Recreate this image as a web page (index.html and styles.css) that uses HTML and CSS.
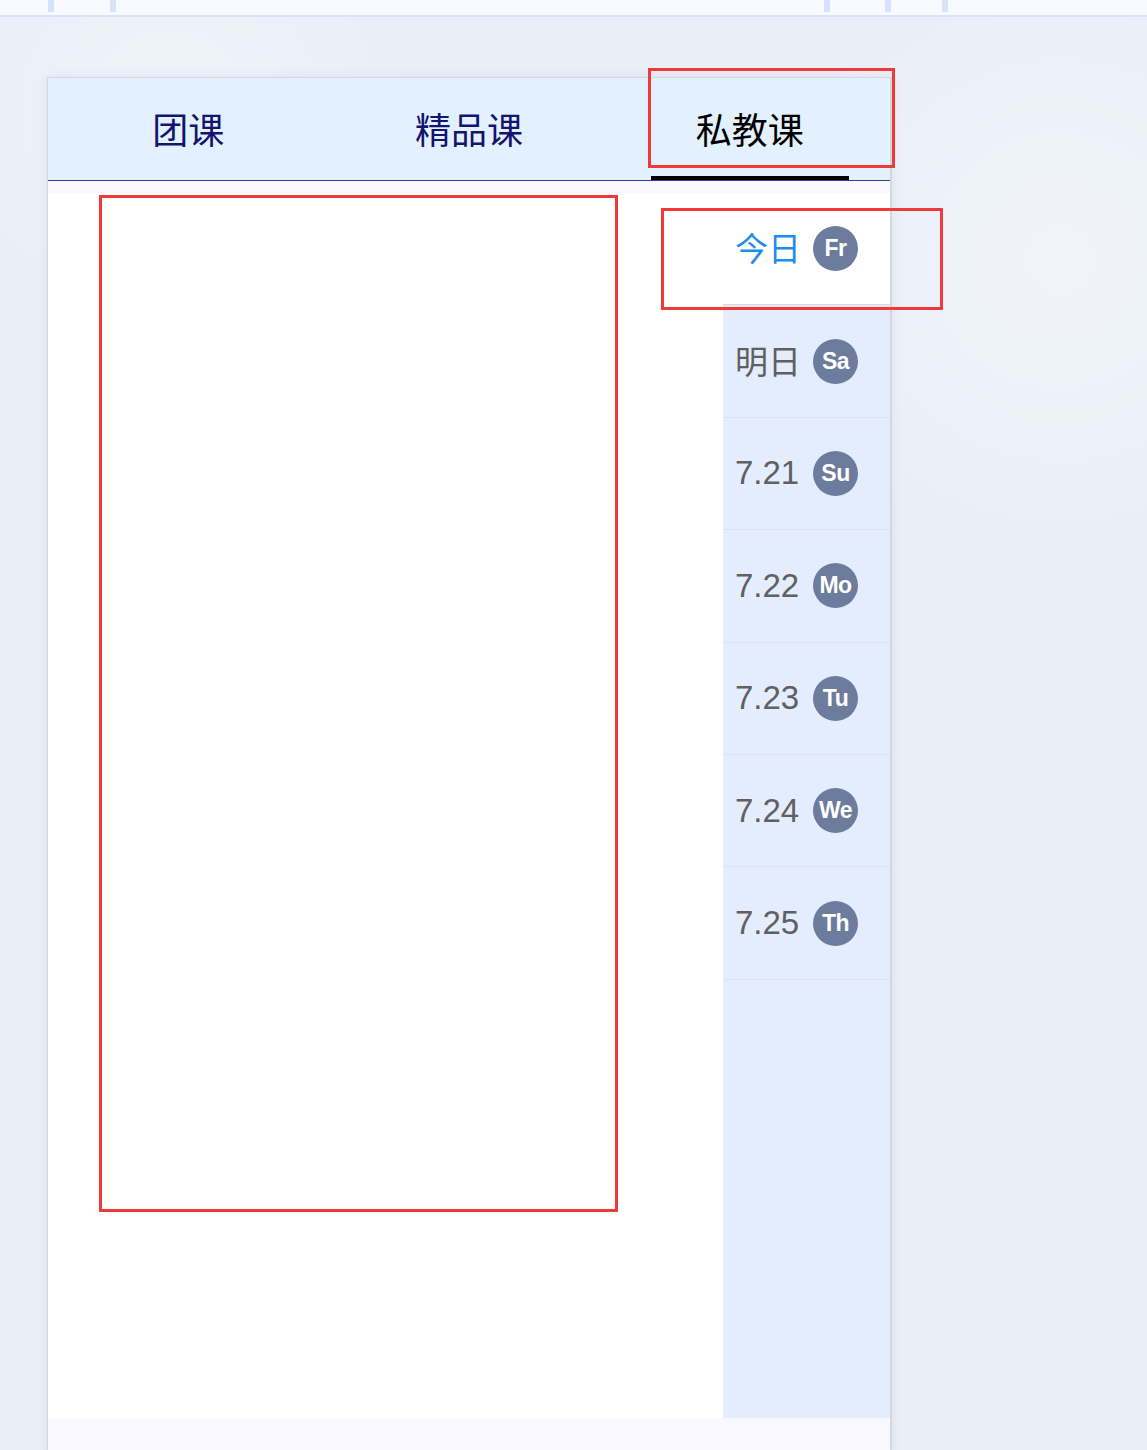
FILE: index.html
```html
<!DOCTYPE html>
<html lang="zh">
<head>
<meta charset="utf-8">
<title>课程</title>
<link rel="stylesheet" href="styles.css">
</head>
<body>
<div class="topbar">
  <span class="tick t1"></span>
  <span class="tick t2"></span>
  <span class="tick t3"></span>
  <span class="tick t4"></span>
  <span class="tick t5"></span>
</div>

<div class="card">
  <div class="tabs">
    <div class="tab"><span class="tab-label">团课</span><span class="tab-bar"></span></div>
    <div class="tab"><span class="tab-label">精品课</span><span class="tab-bar"></span></div>
    <div class="tab active"><span class="tab-label">私教课</span><span class="tab-bar"></span></div>
  </div>
  <div class="gap-strip"></div>
  <div class="body">
    <div class="content"></div>
    <ul class="dates">
      <li class="date selected"><span class="date-text cjk">今日</span><span class="badge">Fr</span></li>
      <li class="date"><span class="date-text cjk">明日</span><span class="badge">Sa</span></li>
      <li class="date"><span class="date-text">7.21</span><span class="badge">Su</span></li>
      <li class="date"><span class="date-text">7.22</span><span class="badge">Mo</span></li>
      <li class="date"><span class="date-text">7.23</span><span class="badge">Tu</span></li>
      <li class="date"><span class="date-text">7.24</span><span class="badge">We</span></li>
      <li class="date"><span class="date-text">7.25</span><span class="badge">Th</span></li>
    </ul>
  </div>
  <div class="foot-strip"></div>
</div>

<div class="mark mark-tab"></div>
<div class="mark mark-today"></div>
<div class="mark mark-list"></div>
</body>
</html>
```

FILE: styles.css
```css
* { box-sizing: border-box; }

html, body {
  margin: 0;
  padding: 0;
}

body {
  position: relative;
  height: 1450px;
  overflow: hidden;
  font-family: "Liberation Sans", "Noto Sans CJK SC", sans-serif;
  background:
    radial-gradient(circle at 1060px 260px, rgba(255,255,255,0.35), rgba(255,255,255,0) 320px),
    radial-gradient(circle at 170px 110px, rgba(255,255,255,0.3), rgba(255,255,255,0) 260px),
    #e9eef7;
}

/* top toolbar strip */
.topbar {
  height: 17px;
  background: #f7f9fe;
  border-bottom: 2px solid #d6e3fb;
  display: flex;
  align-items: flex-start;
}
.tick {
  display: block;
  width: 6px;
  height: 12px;
  background: #d4e2fb;
}
.t1 { margin-left: 48px; }
.t2 { margin-left: 56px; }
.t3 { margin-left: 708px; }
.t4 { margin-left: 55px; }
.t5 { margin-left: 51px; }

/* card */
.card {
  margin: 60px 0 0 47px;
  width: 845px;
  border: 1px solid #d5d7dc;
  border-right-width: 2px;
  border-bottom: 0;
  background: #fff;
  box-shadow: 0 0 10px rgba(60, 70, 100, 0.08);
}

.tabs {
  display: grid;
  grid-template-columns: repeat(3, 1fr);
  height: 103px;
  background: #e3f0fd;
  border-bottom: 1px solid #363c8c;
}
.tab {
  display: flex;
  flex-direction: column;
  align-items: center;
}
.tab-label {
  flex: 1;
  display: flex;
  align-items: center;
  padding-top: 2px;
  font-family: "Noto Sans CJK SC", sans-serif;
  font-size: 36px;
  color: #14146e;
}
.tab-bar {
  width: 198px;
  height: 4px;
  background: transparent;
}
.tab.active .tab-label { color: #000; }
.tab.active .tab-bar { background: #000; }

.gap-strip {
  height: 12px;
  background: #f9f8fe;
}

.body {
  display: flex;
  height: 1225px;
}
.content {
  flex: 1;
  background: #fff;
}

.dates {
  list-style: none;
  margin: 0;
  padding: 0;
  width: 167px;
  background: #e3edfd;
}
.date {
  height: 112.4px;
  display: flex;
  align-items: center;
  padding-left: 12px;
  border-bottom: 1px solid #dde2ea;
}
.date.selected {
  background: #fff;
  border-bottom-color: #d9d9dc;
}
.date-text {
  font-size: 33px;
  color: #606060;
  width: 66px;
  white-space: nowrap;
}
.date-text.cjk {
  margin-top: -3px;
}
.date.selected .date-text { color: #1f8ceb; }

.badge {
  margin-left: 12px;
  width: 45px;
  height: 45px;
  border-radius: 50%;
  background: #6d7b9c;
  color: #fff;
  font-weight: bold;
  font-size: 23px;
  display: flex;
  align-items: center;
  justify-content: center;
  letter-spacing: -0.5px;
}

.foot-strip {
  height: 40px;
  background: #f9f8fe;
}

/* red annotation boxes overlaid on the screenshot */
.mark {
  position: absolute;
  border: 3px solid #f03a3a;
  pointer-events: none;
}
.mark-tab   { left: 648px; top: 68px;  width: 247px; height: 100px; }
.mark-today { left: 661px; top: 208px; width: 282px; height: 102px; }
.mark-list  { left: 99px;  top: 195px; width: 519px; height: 1017px; }
```
